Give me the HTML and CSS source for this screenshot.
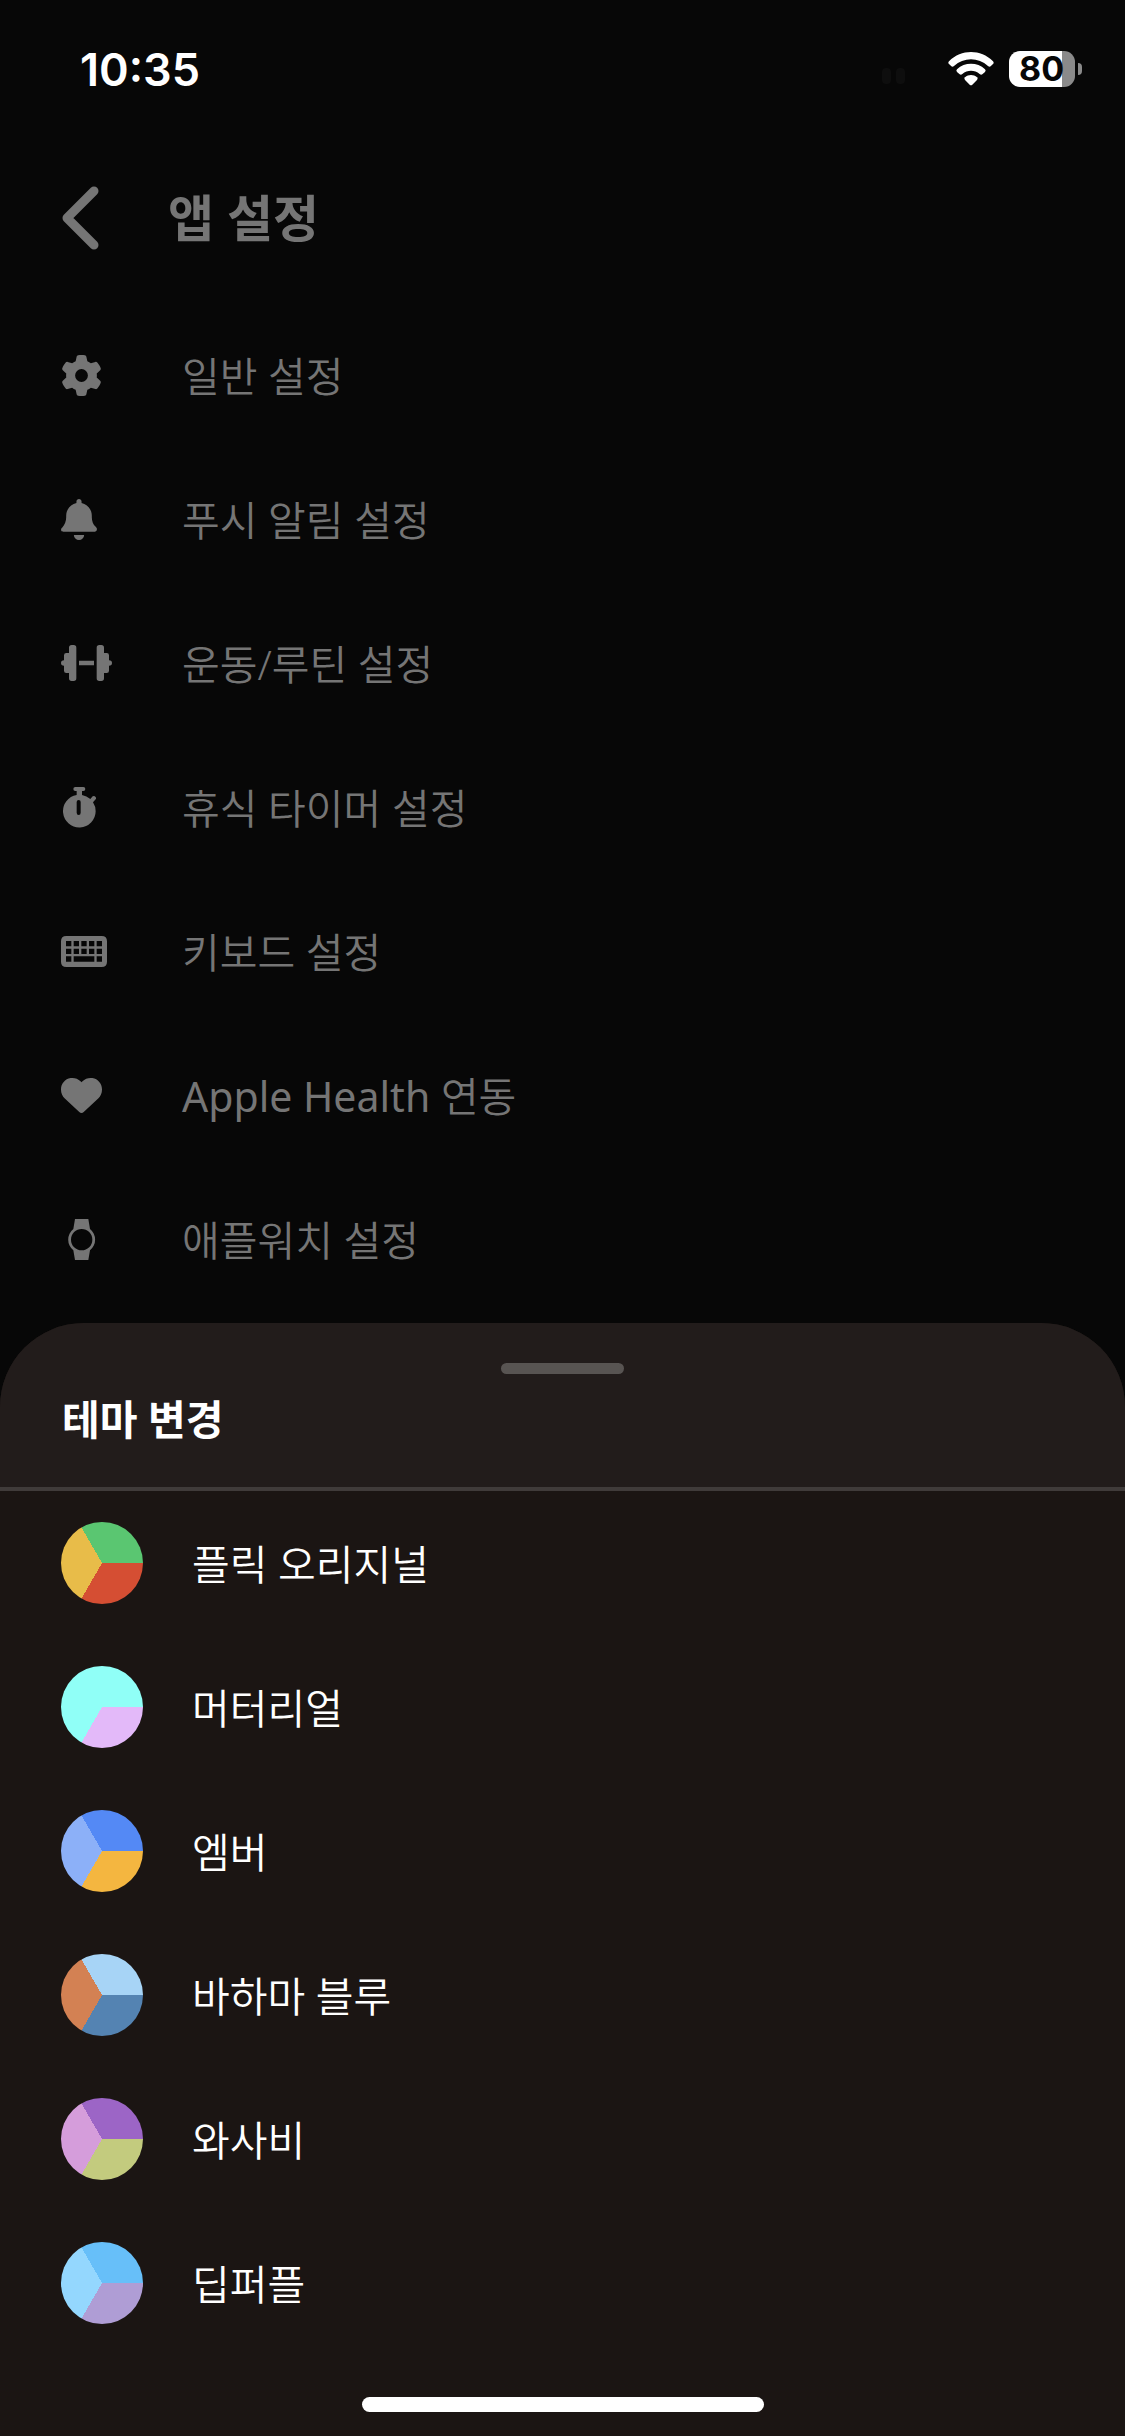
FILE: index.html
```html
<!DOCTYPE html>
<html lang="ko">
<head>
<meta charset="utf-8">
<meta name="viewport" content="width=device-width, initial-scale=1">
<title>앱 설정</title>
<link rel="stylesheet" href="styles.css">
</head>
<body>
<div class="status-bar">
  <time class="clock">10:35</time>
  <div class="status-icons">
    <svg class="signal" width="24" height="18" viewBox="0 0 24 18" aria-hidden="true"><rect width="9" height="16" rx="4"/><rect x="14" width="9" height="16" rx="4"/></svg>
    <svg class="wifi" width="46" height="34" viewBox="0 0 138 102" aria-hidden="true">
      <path d="M3 28C40-9 98-9 135 28Q139 32 135 36L128 43Q124 46 120 42C91 15 47 15 18 42Q14 46 10 43L3 36Q-1 32 3 28Z"/>
      <path d="M27 52C50 30 88 30 111 52Q115 56 111 60L103 67Q99 70 95 66C80 53 58 53 43 66Q39 70 35 67L27 60Q23 56 27 52Z"/>
      <path d="M51 76C61 67 77 67 87 76Q91 80 87 84L73 98Q69 102 65 98L51 84Q47 80 51 76Z"/>
    </svg>
    <div class="battery"><span class="battery-level">80</span></div>
  </div>
</div>

<header class="app-header">
  <button class="back" type="button" aria-label="뒤로">
    <svg width="37" height="64" viewBox="0 0 37 64" aria-hidden="true"><path d="M32 5L5 32l27 27"/></svg>
  </button>
  <h1>앱 설정</h1>
</header>

<nav class="settings">
  <a class="setting" href="#general"><svg width="41" height="41" viewBox="0 0 512 512" aria-hidden="true"><path d="M495.900 166.600c3.200 8.700.5 18.400-6.400 24.600l-43.300 39.400c1.100 8.300 1.700 16.800 1.700 25.400s-.6 17.100-1.700 25.400l43.300 39.400c6.900 6.200 9.600 15.900 6.400 24.600-4.400 11.900-9.700 23.300-15.800 34.300l-4.700 8.100c-6.600 11-14 21.400-22.100 31.200-5.900 7.200-15.700 9.600-24.500 6.800l-55.700-17.700c-13.400 10.300-28.200 18.900-44 25.400l-12.500 57.100c-2 9.100-9 16.300-18.200 17.800-13.800 2.300-28 3.500-42.500 3.500s-28.700-1.200-42.500-3.500c-9.200-1.500-16.200-8.700-18.200-17.800l-12.500-57.100c-15.800-6.500-30.600-15.100-44-25.400L83.100 425.900c-8.800 2.800-18.600.3-24.500-6.800-8.100-9.800-15.500-20.200-22.100-31.200l-4.700-8.100c-6.100-11-11.400-22.400-15.800-34.300-3.200-8.700-.5-18.400 6.400-24.600l43.300-39.400C64.600 273.100 64 264.600 64 256s.6-17.100 1.700-25.400L22.400 191.200c-6.900-6.200-9.600-15.900-6.400-24.600 4.400-11.900 9.700-23.300 15.800-34.300l4.700-8.100c6.600-11 14-21.400 22.100-31.200 5.900-7.200 15.700-9.600 24.500-6.800l55.700 17.700c13.400-10.300 28.200-18.900 44-25.400l12.500-57.100c2-9.100 9-16.300 18.200-17.800C227.300 1.200 241.500 0 256 0s28.700 1.200 42.500 3.500c9.200 1.500 16.200 8.700 18.200 17.800l12.500 57.100c15.800 6.500 30.600 15.100 44 25.400l55.700-17.700c8.800-2.800 18.600-.3 24.500 6.800 8.100 9.800 15.500 20.200 22.100 31.200l4.700 8.100c6.100 11 11.400 22.400 15.800 34.300zM256 336a80 80 0 1 0 0-160 80 80 0 1 0 0 160z"/></svg><span class="label">일반 설정</span></a>
  <a class="setting" href="#push"><svg width="36" height="41" viewBox="0 0 448 512" aria-hidden="true"><path d="M224 0c-17.700 0-32 14.300-32 32v19.200C119 66 64 130.600 64 208v18.800c0 47-17.300 92.400-48.500 127.600l-7.400 8.300c-8.400 9.400-10.400 22.900-5.300 34.400S19.400 408 32 408h384c12.600 0 24-7.400 29.200-18.900s3.100-25-5.300-34.400l-7.400-8.300C401.300 319.200 384 273.900 384 226.800V208c0-77.400-55-142-128-156.800V32c0-17.700-14.300-32-32-32zM160 448a64 64 0 0 0 128 0z"/></svg><span class="label">푸시 알림 설정</span></a>
  <a class="setting" href="#workout"><svg width="51" height="36" viewBox="0 0 153 108" aria-hidden="true"><path d="M24 8Q24 0 32 0h6q8 0 8 8v92q0 8-8 8h-6q-8 0-8-8V84h-8q-7 0-7-7V62q-9 0-9-8t9-8V31q0-7 7-7h8zM129 8q0-8-8-8h-6q-8 0-8 8v92q0 8 8 8h6q8 0 8-8V84h8q7 0 7-7V62q9 0 9-8t-9-8V31q0-7-7-7h-8zM54 47h45v14H54z"/></svg><span class="label">운동/루틴 설정</span></a>
  <a class="setting" href="#timer"><svg width="36" height="41" viewBox="0 0 108 123" aria-hidden="true"><path fill-rule="evenodd" d="M43 0h24q6 0 6 6t-6 6h-4v12q14 3 25 12l7-8q5-3 8 1 4 4 1 8l-8 9q8 12 8 27a49 49 0 1 1-57-49V12h-4q-6 0-6-6t6-6zm10 39q-6 0-6 6v32q0 7 6 7t6-7V45q0-6-6-6z"/></svg><span class="label">휴식 타이머 설정</span></a>
  <a class="setting" href="#keyboard"><svg width="46" height="31" viewBox="0 0 138 93" aria-hidden="true"><path fill-rule="evenodd" d="M16 0h106q16 0 16 16v61q0 16-16 16H16Q0 93 0 77V16Q0 0 16 0zM15 15v16h16V15zm23 0v16h16V15zm23 0v16h16V15zm23 0v16h16V15zm23 0v16h16V15zM15 38v16h16V38zm23 0v16h16V38zm23 0v16h16V38zm23 0v16h16V38zm23 0v16h16V38zM15 61v16h16V61zm23 0v16h62V61zm69 0v16h16V61z"/></svg><span class="label">키보드 설정</span></a>
  <a class="setting" href="#health"><svg width="41" height="36" viewBox="0 32 512 448" aria-hidden="true"><path d="M47.600 300.400l180.700 168.700c7.500 7 17.400 10.900 27.700 10.900s20.200-3.900 27.700-10.900l180.700-168.700c30.400-28.300 47.600-68 47.600-109.500v-5.800c0-69.900-50.500-129.500-119.400-141C347 36.500 300.600 51.400 268 84l-12 12-12-12c-32.600-32.600-79-47.500-124.600-39.900C50.500 55.600 0 115.200 0 185.100v5.800c0 41.500 17.200 81.200 47.600 109.500z"/></svg><span class="label"><span class="latin">Apple Health </span>연동</span></a>
  <a class="setting" href="#watch"><svg width="41" height="41" viewBox="0 0 123 123" aria-hidden="true"><path fill-rule="evenodd" d="M42 0h40l5 30a41 41 0 0 1 0 64l-5 29H42l-5-29a41 41 0 0 1 0-64zM62 30a32 32 0 1 0 0 64 32 32 0 0 0 0-64z"/></svg><span class="label">애플워치 설정</span></a>
</nav>

<section class="sheet" role="dialog" aria-labelledby="sheet-title">
  <header class="sheet-header">
    <div class="grabber"></div>
    <h2 id="sheet-title">테마 변경</h2>
  </header>
  <div class="themes">
    <button class="theme" type="button"><span class="swatch original"></span><span class="label">플릭 오리지널</span></button>
    <button class="theme" type="button"><span class="swatch material"></span><span class="label">머터리얼</span></button>
    <button class="theme" type="button"><span class="swatch ember"></span><span class="label">엠버</span></button>
    <button class="theme" type="button"><span class="swatch bahama"></span><span class="label">바하마 블루</span></button>
    <button class="theme" type="button"><span class="swatch wasabi"></span><span class="label">와사비</span></button>
    <button class="theme" type="button"><span class="swatch deep-purple"></span><span class="label">딥퍼플</span></button>
  </div>
  <div class="home-area"><div class="home-indicator"></div></div>
</section>
</body>
</html>
```
FILE: styles.css
```css
* {
  box-sizing: border-box;
}

body {
  margin: 0;
  min-height: 100vh;
  display: flex;
  flex-direction: column;
  background: #070707;
  color: #757575;
  font-family: "Noto Sans", "Noto Sans CJK KR", sans-serif;
  font-size: 41px;
  font-weight: 350;
  line-height: 60px;
}

button {
  margin: 0;
  padding: 0;
  border: 0;
  background: none;
  color: inherit;
  font: inherit;
  text-align: left;
}

h1,
h2 {
  margin: 0;
  font-weight: 700;
}

svg {
  display: block;
  flex: none;
  fill: currentColor;
}

.label {
  padding-top: 2px;
}

.latin {
  font-weight: 400;
}

/* Status bar */
.status-bar {
  height: 138px;
  padding: 0 43px 0 80px;
  display: flex;
  align-items: center;
  justify-content: space-between;
  color: #fff;
  font-family: Inter, sans-serif;
}

.clock {
  padding-top: 2px;
  font-size: 45px;
  font-weight: 600;
}

.status-icons {
  display: flex;
  align-items: center;
}

.signal {
  margin: 16px 42px 0 0;
  color: #0e0e0e;
}

.wifi {
  margin-right: 15px;
}

.battery {
  position: relative;
  width: 66px;
  height: 36px;
  margin-right: 7px;
  border-radius: 11px;
  background: linear-gradient(90deg, #fff 80%, #8a8a8a 80%);
}

.battery::after {
  content: "";
  position: absolute;
  left: 69px;
  top: 12px;
  width: 4px;
  height: 12px;
  border-radius: 0 4px 4px 0;
  background: #8a8a8a;
}

.battery-level {
  display: block;
  padding-left: 10px;
  color: #070707;
  font-size: 34px;
  font-weight: 700;
  line-height: 36px;
}

/* Screen header */
.app-header {
  height: 160px;
  padding: 0 62px;
  display: flex;
  align-items: center;
  gap: 69px;
}

.back path {
  fill: none;
  stroke: currentColor;
  stroke-width: 9px;
  stroke-linecap: round;
  stroke-linejoin: round;
}

h1 {
  font-size: 50px;
}

/* Settings list */
.settings {
  padding-top: 5px;
}

.setting {
  height: 144px;
  padding: 0 61px;
  display: grid;
  grid-template-columns: 121px 1fr;
  align-items: center;
  color: inherit;
  text-decoration: none;
}

/* Bottom sheet */
.sheet {
  margin-top: auto;
  border-radius: 84px 84px 0 0;
  overflow: hidden;
  background: #1b1513;
  color: #fff;
}

.sheet-header {
  height: 168px;
  padding: 40px 62px 0;
  border-bottom: 4px solid #403b3a;
  background: #221c1b;
}

.grabber {
  width: 123px;
  height: 11px;
  margin: 0 auto 15px;
  border-radius: 6px;
  background: #585452;
}

h2 {
  font-size: 41px;
}

.theme {
  width: 100%;
  height: 144px;
  padding: 0 61px;
  display: flex;
  align-items: center;
  gap: 49px;
}

.swatch {
  flex: none;
  width: 82px;
  height: 82px;
  border-radius: 50%;
  background: conic-gradient(from 90deg, var(--c) 120deg, var(--b) 120deg 240deg, var(--a) 240deg);
}

.original {
  --a: #5ac671;
  --b: #e8bc49;
  --c: #d54e33;
}

.material {
  --a: #90fff7;
  --b: #90fff7;
  --c: #e3b9f9;
}

.ember {
  --a: #5489f5;
  --b: #8cb0f8;
  --c: #f4b640;
}

.bahama {
  --a: #a7d4f6;
  --b: #d38153;
  --c: #5483b2;
}

.wasabi {
  --a: #9c65c6;
  --b: #d59ddb;
  --c: #c3cb7e;
}

.deep-purple {
  --a: #67bff9;
  --b: #94d7fe;
  --c: #af9dd5;
}

.home-area {
  height: 81px;
  padding-top: 42px;
}

.home-indicator {
  width: 402px;
  height: 15px;
  margin: 0 auto;
  border-radius: 8px;
  background: #fff;
}
```
